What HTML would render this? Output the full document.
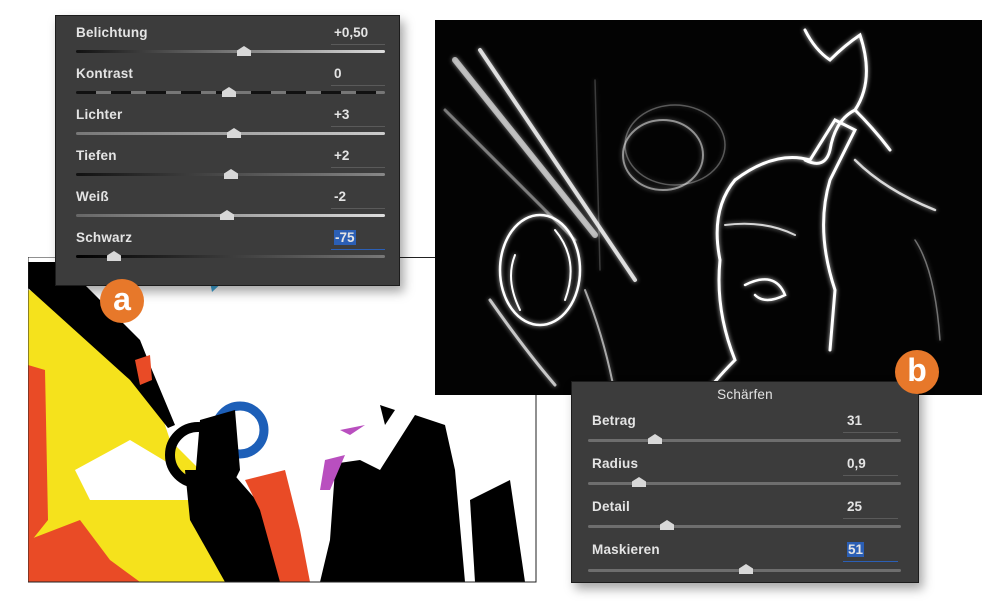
<!DOCTYPE html>
<html><head><meta charset="utf-8"><style>
body{margin:0;width:1006px;height:610px;background:#fff;position:relative;overflow:hidden;font-family:"Liberation Sans",sans-serif}
.abs{position:absolute}
.panel{position:absolute;background:#3c3c3c;border:1px solid #1c1c1c;box-shadow:4px 6px 10px rgba(0,0,0,.35)}
.lbl{position:absolute;color:#e4e4e4;font-size:13.5px;font-weight:bold;letter-spacing:.2px}
.val{position:absolute;color:#e4e4e4;font-size:13.5px;font-weight:bold}
.ul{position:absolute;height:1px;background:#5a5a5a}
.trk{position:absolute;height:3px;background:#6e6e6e;border-radius:2px}
.th{position:absolute;width:14px;height:10px;background:#d8d8d8;clip-path:polygon(50% 0,100% 45%,100% 100%,0 100%,0 45%)}
.badge{position:absolute;width:44px;height:44px;border-radius:50%;background:#e7782a;color:#fff;font-weight:bold;font-size:32px;text-align:center;line-height:40px}
</style></head><body>

<svg class="abs" style="left:28px;top:257px" width="509" height="326" viewBox="28 257 509 326">
<rect x="28" y="257" width="509" height="326" fill="#fff"/>
<polygon points="28,290 75,298 150,380 170,440 200,470 260,500 300,582 28,582" fill="#f5e21c"/>
<polygon points="28,365 45,370 48,520 28,545" fill="#e94b26"/>
<polygon points="28,540 80,520 110,560 140,582 28,582" fill="#e94b26"/>
<polygon points="80,300 120,330 160,375 100,345" fill="#fff"/>
<polygon points="75,470 130,440 180,470 200,500 90,500" fill="#fff"/>
<polygon points="28,262 62,262 140,340 152,370 175,425 168,428 130,380 28,288" fill="#000"/>
<polygon points="135,360 150,355 152,380 140,385" fill="#e94b26"/>
<circle cx="198" cy="455" r="28" fill="none" stroke="#000" stroke-width="10"/>
<circle cx="240" cy="430" r="24" fill="none" stroke="#1d5fb8" stroke-width="9"/>
<polygon points="200,420 235,410 240,470 225,500 195,480" fill="#000"/>
<polygon points="185,470 230,470 265,510 300,582 225,582 190,520" fill="#000"/>
<polygon points="245,480 285,470 300,530 310,582 280,582 260,510" fill="#e94b26"/>
<polygon points="335,470 380,470 415,415 445,425 455,470 465,582 320,582 330,540" fill="#000"/>
<polygon points="325,465 360,460 380,470 340,490" fill="#000"/>
<polygon points="325,460 345,455 330,490 320,490" fill="#b94fbf"/>
<polygon points="380,405 395,410 385,425" fill="#000"/>
<polygon points="340,430 365,425 350,435" fill="#b94fbf"/>
<polygon points="470,500 510,480 525,582 475,582" fill="#000"/>
<polygon points="210,282 225,280 212,292" fill="#3fa6d8"/>
<rect x="28" y="257" width="508" height="325" fill="none" stroke="#222" stroke-width="1"/>
</svg>

<svg class="abs" style="left:435px;top:20px" width="547" height="375" viewBox="0 0 547 375">
<defs><filter id="gl" x="-10%" y="-10%" width="120%" height="120%"><feGaussianBlur stdDeviation="2.5"/></filter></defs>
<rect width="547" height="375" fill="#030303"/>
<g id="lines" fill="none" stroke="#fff" stroke-linecap="round">
<path d="M20,40 L160,215" stroke-width="6" opacity=".6"/>
<path d="M10,90 L140,220" stroke-width="3" opacity=".4"/>
<path d="M45,30 L200,260" stroke-width="4" opacity=".8"/>
<ellipse cx="105" cy="250" rx="40" ry="55" stroke-width="2.5"/>
<path d="M80,235 Q70,260 85,290" stroke-width="2"/>
<path d="M120,210 Q145,240 130,280" stroke-width="2"/>
<path d="M55,280 Q90,330 120,365" stroke-width="3" opacity=".7"/>
<path d="M150,270 Q170,320 180,375" stroke-width="2" opacity=".6"/>
<ellipse cx="228" cy="135" rx="40" ry="35" stroke-width="2" opacity=".5"/>
<ellipse cx="240" cy="125" rx="50" ry="40" stroke-width="1.5" opacity=".3"/>
<path d="M370,10 Q380,30 395,40 Q410,25 425,15 Q440,60 420,90 Q400,100 395,130 Q390,150 370,140" stroke-width="3"/>
<path d="M420,90 Q440,110 455,130" stroke-width="3"/>
<path d="M300,160 Q340,130 375,140 L400,100 L420,110 L395,160 Q380,210 400,270 L395,330" stroke-width="3"/>
<path d="M300,160 Q275,190 285,240 Q280,290 300,340 Q280,360 270,375" stroke-width="3"/>
<path d="M290,205 Q330,200 360,215" stroke-width="2" opacity=".8"/>
<path d="M310,265 Q340,250 350,275 Q330,285 320,275" stroke-width="2.5"/>
<path d="M420,140 Q450,170 500,190" stroke-width="2.5" opacity=".8"/>
<path d="M480,220 Q500,250 505,320" stroke-width="1.5" opacity=".4"/>
<path d="M160,60 L165,250" stroke-width="1.5" opacity=".2"/>
</g>
<use href="#lines" filter="url(#gl)" opacity=".8"/>
</svg>

<div class="abs" style="left:398px;top:257px;width:37px;height:1px;background:#222"></div>

<div class="panel" style="left:55px;top:15px;width:343px;height:269px">
<div class="lbl" style="left:20px;top:9px">Belichtung</div>
<div class="lbl" style="left:20px;top:50px">Kontrast</div>
<div class="lbl" style="left:20px;top:91px">Lichter</div>
<div class="lbl" style="left:20px;top:132px">Tiefen</div>
<div class="lbl" style="left:20px;top:173px">Weiß</div>
<div class="lbl" style="left:20px;top:214px">Schwarz</div>
<div class="val" style="left:278px;top:9px">+0,50</div>
<div class="val" style="left:278px;top:50px">0</div>
<div class="val" style="left:278px;top:91px">+3</div>
<div class="val" style="left:278px;top:132px">+2</div>
<div class="val" style="left:278px;top:173px">-2</div>
<div class="val" style="left:278px;top:214px;background:#2b5fb5;padding:0 1px">-75</div>
<div class="ul" style="left:275px;top:28px;width:54px"></div>
<div class="ul" style="left:275px;top:69px;width:54px"></div>
<div class="ul" style="left:275px;top:110px;width:54px"></div>
<div class="ul" style="left:275px;top:151px;width:54px"></div>
<div class="ul" style="left:275px;top:192px;width:54px"></div>
<div class="ul" style="left:275px;top:233px;width:54px;background:#2b5fb5"></div>
<div class="trk" style="left:20px;top:34px;width:309px;background:linear-gradient(90deg,#111,#ddd)"></div>
<div class="trk" style="left:20px;top:75px;width:309px;background:repeating-linear-gradient(90deg,#111 0 20px,#777 20px 35px)"></div>
<div class="trk" style="left:20px;top:116px;width:309px;background:linear-gradient(90deg,#777,#ccc)"></div>
<div class="trk" style="left:20px;top:157px;width:309px;background:linear-gradient(90deg,#111,#888)"></div>
<div class="trk" style="left:20px;top:198px;width:309px;background:linear-gradient(90deg,#666,#ddd)"></div>
<div class="trk" style="left:20px;top:239px;width:309px;background:linear-gradient(90deg,#000,#777)"></div>
<div class="th" style="left:181px;top:30px"></div>
<div class="th" style="left:166px;top:71px"></div>
<div class="th" style="left:171px;top:112px"></div>
<div class="th" style="left:168px;top:153px"></div>
<div class="th" style="left:164px;top:194px"></div>
<div class="th" style="left:51px;top:235px"></div>
</div>

<div class="panel" style="left:571px;top:381px;width:346px;height:200px">
<div class="lbl" style="left:0;width:346px;text-align:center;top:5px;font-weight:normal">Schärfen</div>
<div class="lbl" style="left:20px;top:31px">Betrag</div>
<div class="lbl" style="left:20px;top:74px">Radius</div>
<div class="lbl" style="left:20px;top:117px">Detail</div>
<div class="lbl" style="left:20px;top:160px">Maskieren</div>
<div class="val" style="left:275px;top:31px">31</div>
<div class="val" style="left:275px;top:74px">0,9</div>
<div class="val" style="left:275px;top:117px">25</div>
<div class="val" style="left:275px;top:160px;background:#2b5fb5;padding:0 1px">51</div>
<div class="ul" style="left:271px;top:50px;width:55px"></div>
<div class="ul" style="left:271px;top:93px;width:55px"></div>
<div class="ul" style="left:271px;top:136px;width:55px"></div>
<div class="ul" style="left:271px;top:179px;width:55px;background:#2b5fb5"></div>
<div class="trk" style="left:16px;top:57px;width:313px"></div>
<div class="trk" style="left:16px;top:100px;width:313px"></div>
<div class="trk" style="left:16px;top:143px;width:313px"></div>
<div class="trk" style="left:16px;top:187px;width:313px"></div>
<div class="th" style="left:76px;top:52px"></div>
<div class="th" style="left:60px;top:95px"></div>
<div class="th" style="left:88px;top:138px"></div>
<div class="th" style="left:167px;top:182px"></div>
</div>

<div class="badge" style="left:100px;top:279px">a</div>
<div class="badge" style="left:895px;top:350px">b</div>
</body></html>
